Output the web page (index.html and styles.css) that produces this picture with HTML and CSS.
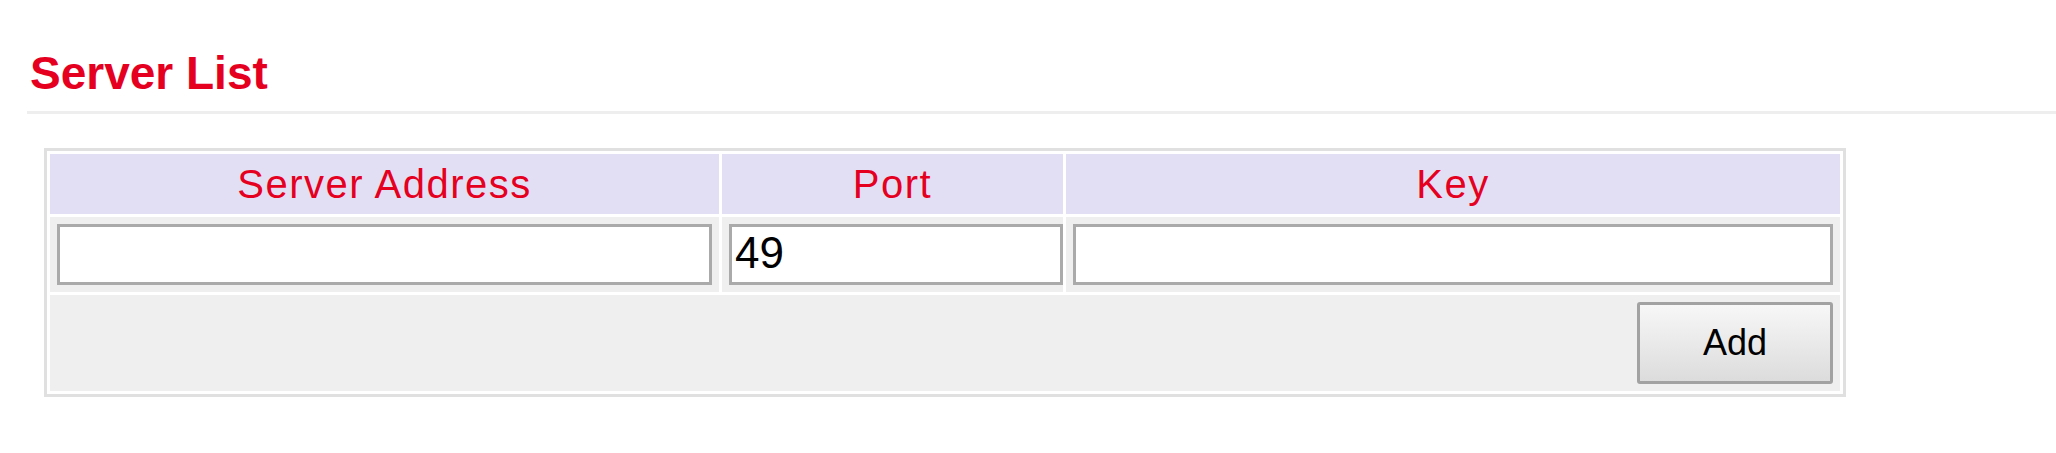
FILE: index.html
```html
<!DOCTYPE html>
<html>
<head>
<meta charset="utf-8">
<title>Server List</title>
<link rel="stylesheet" href="styles.css">
</head>
<body>
<div class="page">
  <h2 class="title">Server List</h2>
  <table class="servers">
    <colgroup>
      <col class="c-addr">
      <col class="c-port">
      <col class="c-key">
    </colgroup>
    <thead>
      <tr class="head-row">
        <th>Server Address</th>
        <th>Port</th>
        <th>Key</th>
      </tr>
    </thead>
    <tbody>
      <tr class="input-row">
        <td><input class="field" type="text" value=""></td>
        <td class="port-cell"><input class="field" type="text" value="49"></td>
        <td><input class="field" type="text" value=""></td>
      </tr>
      <tr class="action-row">
        <td colspan="3"><button class="btn" type="button">Add</button></td>
      </tr>
    </tbody>
  </table>
</div>
</body>
</html>
```

FILE: styles.css
```css
html, body {
  margin: 0;
  padding: 0;
  background: #ffffff;
}

body {
  font-family: "Liberation Sans", Arial, sans-serif;
}

.page {
  padding: 46px 0 0 27px;
}

.title {
  margin: 0;
  padding: 0 0 11px 3px;
  font-size: 46px;
  line-height: 54px;
  font-weight: bold;
  color: #e6001f;
  border-bottom: 3px solid #eeeeee;
}

.servers {
  margin: 34px 0 0 17px;
  width: 1802px;
  table-layout: fixed;
  border-collapse: separate;
  border-spacing: 3px;
  border: 3px solid #e0e0e0;
  background: #ffffff;
}

.c-addr { width: 669px; }
.c-port { width: 341px; }
.c-key  { width: 774px; }

.head-row th {
  height: 60px;
  padding: 0;
  background: #e2dff5;
  color: #e6001f;
  font-size: 40px;
  font-weight: normal;
  letter-spacing: 1.5px;
  text-align: center;
  vertical-align: middle;
}

.input-row td {
  height: 75px;
  box-sizing: border-box;
  padding: 7px 7px 7px 7px;
  background: #efefef;
  vertical-align: top;
}

.input-row td.port-cell {
  padding-right: 0;
}

.field {
  display: block;
  box-sizing: border-box;
  width: 100%;
  height: 61px;
  margin: 0;
  padding: 0 3px 3px 3px;
  border: 3px solid #aaaaaa;
  background: #ffffff;
  font-family: "Liberation Sans", Arial, sans-serif;
  font-size: 44px;
  color: #000000;
  outline: none;
}

.action-row td {
  height: 96px;
  box-sizing: border-box;
  padding: 7px;
  background: #efefef;
  vertical-align: top;
}

.btn {
  display: block;
  margin-left: auto;
  box-sizing: border-box;
  width: 196px;
  height: 82px;
  padding: 0;
  border: 3px solid #a2a2a2;
  border-radius: 3px;
  background: linear-gradient(#f7f7f7, #dcdcdc);
  font-family: "Liberation Sans", Arial, sans-serif;
  font-size: 36px;
  color: #000000;
}
```
